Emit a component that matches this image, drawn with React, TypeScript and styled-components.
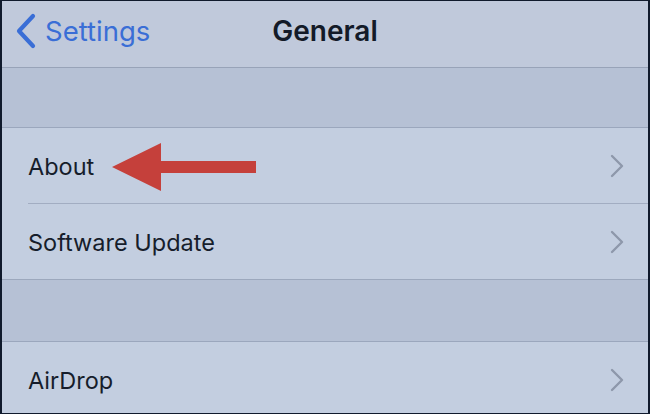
import React from "react";
import styled, { createGlobalStyle } from "styled-components";

const GlobalStyle = createGlobalStyle`
  html, body {
    margin: 0;
    padding: 0;
    background: #0f1a2e;
  }
  * {
    box-sizing: border-box;
  }
`;

const Screen = styled.div`
  position: relative;
  width: 650px;
  height: 414px;
  overflow: hidden;
  border: solid #101a2c;
  border-width: 1px 2px 1px 2px;
  background: #c3cee0;
  font-family: Inter, "Noto Sans", "Liberation Sans", sans-serif;
  color: #111827;
`;

const NavBar = styled.div`
  display: grid;
  grid-template-columns: 1fr auto 1fr;
  align-items: center;
  height: 67px;
  padding: 0 0 6px 0;
  background: #c0c9db;
  border-bottom: 1px solid #98a3b8;
`;

const BackButton = styled.div`
  display: flex;
  align-items: center;
  gap: 8px;
  padding-left: 13px;
  color: #3a6ed6;
  font-size: 27.5px;
`;

const Title = styled.div`
  font-size: 28px;
  font-weight: 600;
  color: #131a28;
`;

const Gap = styled.div<{ $h: number }>`
  height: ${(p) => p.$h}px;
  background: #b6c1d5;
  border-bottom: 1px solid #9ba7bd;
`;

const Group = styled.div`
  background: #c3cee0;
  border-bottom: 1px solid #9ca8bd;
  padding-left: 26px;
`;

const Row = styled.div<{ $h: number; $last?: boolean }>`
  display: flex;
  align-items: center;
  justify-content: space-between;
  height: ${(p) => p.$h}px;
  padding: 0 24px 0 0;
  border-bottom: ${(p) => (p.$last ? "none" : "1px solid #a2adc2")};
  font-size: 23.5px;
  color: #161d2b;
`;

const Label = styled.span`
  padding-top: 2px;
`;

const Arrow = styled.svg`
  position: absolute;
  left: 108px;
  top: 140px;
`;

const Chevron = () => (
  <svg width="14" height="24" viewBox="0 0 14 24">
    <path d="M2 2 L12 12 L2 22" fill="none" stroke="#8e98ab" strokeWidth="2.4" strokeLinecap="round" strokeLinejoin="round" />
  </svg>
);

const BackChevron = () => (
  <svg width="22" height="36" viewBox="0 0 22 36">
    <path d="M18 3 L4 18 L18 33" fill="none" stroke="#3a6ed6" strokeWidth="4.2" strokeLinecap="round" strokeLinejoin="round" />
  </svg>
);

export default function App() {
  return (
    <>
      <GlobalStyle />
      <Screen>
        <NavBar>
          <BackButton>
            <BackChevron />
            <span>Settings</span>
          </BackButton>
          <Title>General</Title>
          <div />
        </NavBar>
        <Gap $h={60} />
        <Group>
          <Row $h={76}>
            <Label>About</Label>
            <Chevron />
          </Row>
          <Row $h={75} $last>
            <Label>Software Update</Label>
            <Chevron />
          </Row>
        </Group>
        <Gap $h={62} />
        <Group>
          <Row $h={75} $last>
            <Label>AirDrop</Label>
            <Chevron />
          </Row>
        </Group>
        <Arrow width="150" height="54" viewBox="0 0 150 54">
          <path d="M2 26 L51 2 L51 20 L146 20 L146 32 L51 32 L51 50 Z" fill="#c5403b" />
        </Arrow>
      </Screen>
    </>
  );
}
